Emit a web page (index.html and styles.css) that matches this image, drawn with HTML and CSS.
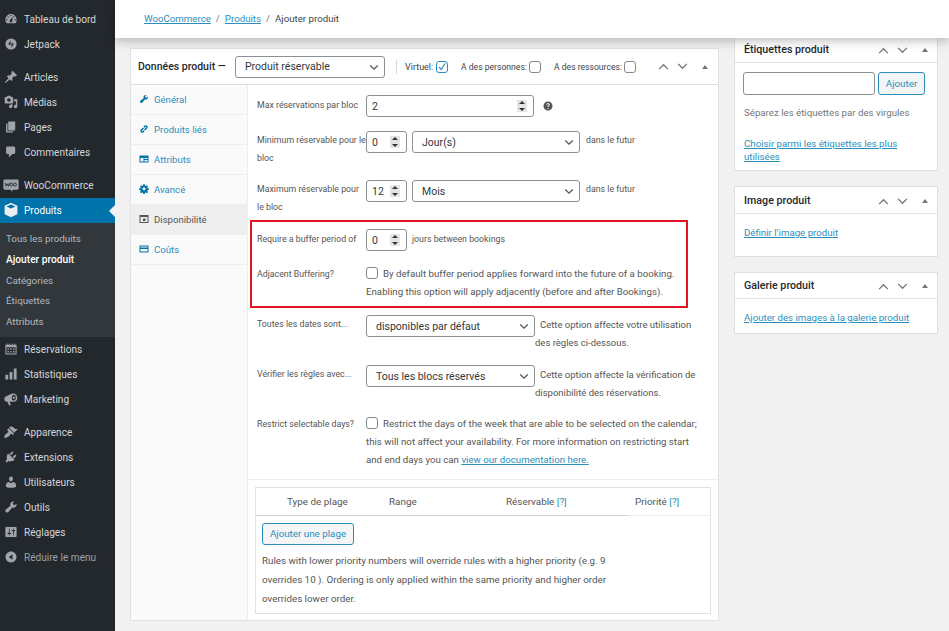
FILE: index.html
```html
<!DOCTYPE html>
<html lang="fr">
<head>
<meta charset="utf-8">
<title>Ajouter produit</title>
<link rel="stylesheet" href="styles.css">
</head>
<body>
<div class="page">
<aside class="sidebar">
  <nav class="menu">
    <a class="item"><svg class="ic" viewBox="0 0 20 20"><path fill-rule="evenodd" d="M3.76 16h12.48c1.1-1.37 1.76-3.11 1.76-5 0-4.42-3.58-8-8-8s-8 3.58-8 8c0 1.89.66 3.63 1.76 5zM10 4c.55 0 1 .45 1 1s-.45 1-1 1-1-.45-1-1 .45-1 1-1zM6 6c.55 0 1 .45 1 1s-.45 1-1 1-1-.45-1-1 .45-1 1-1zm8 0c.55 0 1 .45 1 1s-.45 1-1 1-1-.45-1-1 .45-1 1-1zm-5.37 5.55L12 7v6c0 1.1-.9 2-2 2s-2-.9-2-2c0-.57.24-1.08.63-1.45zM4 10c.55 0 1 .45 1 1s-.45 1-1 1-1-.45-1-1 .45-1 1-1zm12 0c.55 0 1 .45 1 1s-.45 1-1 1-1-.45-1-1 .45-1 1-1z"/></svg>Tableau de bord</a>
    <a class="item"><svg class="ic" viewBox="0 0 20 20"><path fill-rule="evenodd" d="M10 2a8 8 0 1 0 0 16 8 8 0 0 0 0-16zM9.400 4.500v7L6 10.300zM10.600 15.500v-7l3.400 1.200z"/></svg>Jetpack</a>
    <a class="item sep"><svg class="ic" viewBox="0 0 20 20"><path d="M10.44 3.02l1.82-1.82 6.36 6.35-1.83 1.82c-1.05-.68-2.48-.57-3.41.36l-.75.75c-.92.93-1.04 2.35-.35 3.41l-1.83 1.82-2.41-2.41-2.8 2.79c-.42.42-3.38 2.71-3.8 2.29s1.86-3.39 2.28-3.81l2.79-2.79L4.1 9.36l1.83-1.82c1.05.69 2.48.57 3.4-.36l.75-.75c.93-.92 1.05-2.35.36-3.41z"/></svg>Articles</a>
    <a class="item"><svg class="ic" viewBox="0 0 20 20"><path fill-rule="evenodd" d="M13 11V4c0-.55-.45-1-1-1h-1.67L9 1H5L3.67 3H2c-.55 0-1 .45-1 1v7c0 .55.45 1 1 1h10c.55 0 1-.45 1-1zM7 4.5c1.38 0 2.5 1.12 2.5 2.5S8.38 9.5 7 9.5 4.5 8.38 4.5 7 5.62 4.5 7 4.5zM14 6h5v10.5c0 1.38-1.12 2.5-2.5 2.5S14 17.88 14 16.5s1.12-2.5 2.5-2.5c.17 0 .34.02.5.05V9h-3V6zm-4 8.05V13h2v3.5c0 1.38-1.12 2.5-2.5 2.5S7 17.88 7 16.5 8.12 14 9.5 14c.17 0 .34.02.5.05z"/></svg>Médias</a>
    <a class="item"><svg class="ic" viewBox="0 0 20 20"><path d="M6 15V2h10v13H6zm-1 1h8v2H3V5h2v11z"/></svg>Pages</a>
    <a class="item"><svg class="ic" viewBox="0 0 20 20"><path d="M5 2h9c1.1 0 2 .9 2 2v7c0 1.1-.9 2-2 2h-2l-5 5v-5H5c-1.1 0-2-.9-2-2V4c0-1.1.9-2 2-2z"/></svg>Commentaires</a>
    <a class="item sep"><svg class="ic woo" viewBox="0 0 20 20"><path d="M2 3h16c.8 0 1.500.7 1.500 1.500v10c0 .8-.7 1.500-1.500 1.500h-5.500L11 18.500 10 16H2c-.8 0-1.500-.7-1.500-1.500v-10C.5 3.700 1.200 3 2 3z"/><path class="woo-mark" d="M3 7.500l1 4 1.500-3 1.500 3 1-4M10.500 7.500a1.700 2 0 1 0 .01 0zM15 7.500a1.700 2 0 1 0 .01 0z"/></svg>WooCommerce</a>
    <a class="item current"><svg class="ic" viewBox="0 0 20 20"><path fill-rule="evenodd" d="M10 1l8 3.800v10.400L10 19l-8-3.800V4.800zM10 3L4.500 5.600 10 8.200l5.500-2.600z"/></svg>Produits</a>
    <ul class="submenu">
      <li>Tous les produits</li>
      <li class="on">Ajouter produit</li>
      <li>Catégories</li>
      <li>Étiquettes</li>
      <li>Attributs</li>
    </ul>
    <a class="item"><svg class="ic" viewBox="0 0 20 20"><path fill-rule="evenodd" d="M2 4h2V2h1v2h2V2h1v2h4V2h1v2h2V2h1v2h2v14H2zM3.500 7.500v9h13v-9zM5 9h2v2H5zm4 0h2v2H9zm4 0h2v2h-2zm-8 4h2v2H5zm4 0h2v2H9zm4 0h2v2h-2z"/></svg>Réservations</a>
    <a class="item"><svg class="ic" viewBox="0 0 20 20"><path d="M2 11h4v7H2zM8 7h4v11H8zM14 2h4v16h-4z"/></svg>Statistiques</a>
    <a class="item"><svg class="ic" viewBox="0 0 20 20"><path fill-rule="evenodd" d="M13.500 2C16.500 2 19 5 19 8.500S16.500 14 14 14H8l2 5H7l-2-5H4c-2 0-3.500-1.500-3.500-4 0-2 1-3.500 3-4l7-3.500c.8-.3 1.600-.5 2.500-.5zm.5 2c-1.700 0-2.800 2-2.800 4.500s1.100 3.500 2.800 3.500 2.800-1.300 2.800-3.800S15.700 4 14 4zm0 2.500c.9 0 1.500.8 1.500 1.800S14.900 10 14 10s-1.500-.7-1.500-1.700.6-1.800 1.500-1.800z"/></svg>Marketing</a>
    <a class="item sep"><svg class="ic" viewBox="0 0 20 20"><path d="M14.480 11.060L7.410 3.990l1.500-1.500c.5-.56 2.300-.47 3.510.32 1.210.8 1.430 1.280 2.910 2.100 1.180.64 2.450 1.260 4.450.85zm-.71.71L6.700 4.700 4.930 6.470c-.39.39-.39 1.020 0 1.410l1.060 1.060c.39.39.39 1.030 0 1.420-.6.6-1.430 1.110-2.210 1.690-.35.26-.7.53-1.010.84C1.430 13.230.4 16.500.4 18.500c2 0 5.300-1.020 6.640-2.370.31-.31.58-.66.84-1.010.58-.78 1.090-1.610 1.690-2.210.39-.39 1.030-.39 1.420 0l1.060 1.060c.39.39 1.020.39 1.410 0z"/></svg>Apparence</a>
    <a class="item"><svg class="ic" viewBox="0 0 20 20"><path d="M13.110 4.360L9.870 7.600 8 5.730l3.240-3.240c.35-.34 1.050-.2 1.560.32.52.51.66 1.210.31 1.550zm-8 1.770l.91-1.120 9.010 9.010-1.190.84c-.71.71-2.630 1.160-3.820 1.160H6.140L4.900 17.260c-.59.59-1.540.59-2.120 0-.59-.58-.59-1.530 0-2.120l1.240-1.240v-3.880c0-1.130.4-3.190 1.090-3.890zm7.260 3.970l3.240-3.240c.34-.35 1.040-.21 1.550.31.52.51.66 1.210.32 1.550l-3.240 3.250z"/></svg>Extensions</a>
    <a class="item"><svg class="ic" viewBox="0 0 20 20"><path d="M10 9.250c-2.270 0-2.730-3.440-2.730-3.440C7 4.020 7.820 2 9.970 2c2.160 0 2.980 2.020 2.710 3.810 0 0-.41 3.440-2.680 3.440zm0 2.570L12.720 10c2.390 0 4.520 2.330 4.520 4.530v2.490s-3.650 1.130-7.240 1.130c-3.650 0-7.240-1.130-7.240-1.130v-2.490c0-2.250 1.940-4.480 4.470-4.480z"/></svg>Utilisateurs</a>
    <a class="item"><svg class="ic" viewBox="0 0 20 20"><path d="M16.680 9.770c-1.340 1.340-3.300 1.670-4.950.99l-5.410 6.520c-.99.99-2.590.99-3.580 0s-.99-2.590 0-3.570l6.520-5.420c-.68-1.650-.35-3.610.99-4.950 1.280-1.280 3.120-1.620 4.720-1.060l-2.890 2.890 2.820 2.820 2.860-2.870c.53 1.580.18 3.390-1.080 4.650z"/></svg>Outils</a>
    <a class="item"><svg class="ic" viewBox="0 0 20 20"><path fill-rule="evenodd" d="M18 16V4c0-.55-.45-1-1-1H3c-.55 0-1 .45-1 1v12c0 .55.45 1 1 1h14c.55 0 1-.45 1-1zM8 11h1c.55 0 1 .45 1 1s-.45 1-1 1H8v1.500c0 .28-.22.5-.5.5s-.5-.22-.5-.5V13H6c-.55 0-1-.45-1-1s.45-1 1-1h1V5.500c0-.28.22-.5.5-.5s.5.22.5.5V11zm5-2h-1c-.55 0-1-.45-1-1s.45-1 1-1h1V5.500c0-.28.22-.5.5-.5s.5.22.5.5V7h1c.55 0 1 .45 1 1s-.45 1-1 1h-1v5.500c0 .28-.22.5-.5.5s-.5-.22-.5-.5V9z"/></svg>Réglages</a>
    <a class="item collapse"><svg class="ic" viewBox="0 0 20 20"><path fill-rule="evenodd" d="M10 2.160c4.330 0 7.840 3.510 7.840 7.840s-3.510 7.840-7.840 7.840-7.840-3.510-7.840-7.840 3.510-7.840 7.840-7.840zM12 14V6l-5 4z"/></svg>Réduire le menu</a>
  </nav>
</aside>

<div class="wrap">
  <header class="topbar">
    <a class="link">WooCommerce</a><span class="slash">/</span><a class="link">Produits</a><span class="slash">/</span><span>Ajouter produit</span>
  </header>

  <div class="columns">
    <main class="panel">
      <div class="panel-head">
        <strong class="panel-title">Données produit —</strong>
        <div class="select type-select"><span>Produit réservable</span><svg class="chev" viewBox="0 0 12 8"><path d="M1.500 1.500 6 6l4.500-4.500"/></svg></div>
        <span class="vline"></span>
        <label class="opt virt">Virtuel:<span class="cb checked"><svg viewBox="0 0 12 12"><path d="M2.500 6.200 5 9l5-7.500"/></svg></span></label>
        <label class="opt pers">A des personnes:<span class="cb"></span></label>
        <label class="opt res">A des ressources:<span class="cb"></span></label>
        <div class="handles">
          <svg viewBox="0 0 12 8"><path d="M1 7l5-5 5 5"/></svg>
          <svg viewBox="0 0 12 8"><path d="M1 1l5 5 5-5"/></svg>
          <i class="tri"></i>
        </div>
      </div>
      <div class="panel-body">
        <ul class="tabs">
          <li><svg viewBox="0 0 20 20"><path d="M16.680 9.770c-1.340 1.340-3.300 1.670-4.950.99l-5.410 6.520c-.99.99-2.590.99-3.580 0s-.99-2.590 0-3.570l6.520-5.420c-.68-1.650-.35-3.610.99-4.950 1.280-1.280 3.120-1.620 4.720-1.060l-2.890 2.890 2.820 2.820 2.860-2.870c.53 1.580.18 3.390-1.080 4.650z"/></svg>Général</li>
          <li><svg viewBox="0 0 20 20"><path fill="none" d="M9 8l-4.500 4.500a2.300 2.300 0 0 0 3.200 3.200L10 13.400M11 12l4.500-4.500a2.300 2.300 0 0 0-3.200-3.200L10 6.600"/></svg>Produits liés</li>
          <li><svg viewBox="0 0 20 20"><path fill-rule="evenodd" d="M1 3h18v14H1zM3 8v7h6V8zm8 0v2h6V8zm0 4v3h6v-3z"/></svg>Attributs</li>
          <li><svg viewBox="0 0 20 20"><path fill-rule="evenodd" d="M8.500 1h3l.5 2.600 1.700.7 2.200-1.500 2.100 2.100-1.500 2.200.7 1.700 2.600.5v3l-2.600.5-.7 1.700 1.500 2.200-2.100 2.100-2.200-1.500-1.700.7-.5 2.600h-3l-.5-2.600-1.700-.7-2.200 1.500-2.100-2.100 1.500-2.200-.7-1.700-2.600-.5v-3l2.600-.5.7-1.700-1.500-2.200 2.100-2.100 2.200 1.500 1.700-.7zM10 7a3 3 0 1 0 0 6 3 3 0 0 0 0-6z" transform="translate(0 -.500)"/></svg>Avancé</li>
          <li class="active"><svg viewBox="0 0 20 20"><path fill-rule="evenodd" d="M1 2h18v16H1zM3 6v10h14V6zm5 3h5v5H8z"/></svg>Disponibilité</li>
          <li><svg viewBox="0 0 20 20"><path fill-rule="evenodd" d="M1 3h18v14H1zM3 5v2h14V5zm0 5v5h14v-5z"/></svg>Coûts</li>
        </ul>
        <div class="content">
          <div class="group">
            <div class="row r1">
              <div class="lbl">Max réservations par bloc</div>
              <div class="num wide"><span>2</span><i class="spin"></i></div>
              <svg class="help" viewBox="0 0 20 20"><path fill-rule="evenodd" d="M10 1a9 9 0 1 0 0 18 9 9 0 0 0 0-18zM9 14h2v2H9zM6.500 7.500C6.700 5.500 8.200 4.300 10.200 4.300c2 0 3.500 1.200 3.500 3 0 1.400-.8 2.100-1.700 2.800-.7.500-1 .9-1 1.900H9c0-1.600.5-2.300 1.500-3.100.7-.5 1.100-.9 1.100-1.500 0-.8-.6-1.300-1.500-1.300S8.700 6.600 8.600 7.500z"/></svg>
            </div>
            <div class="row two">
              <div class="lbl">Minimum réservable pour le<br>bloc</div>
              <div class="num small"><span>0</span><i class="spin"></i></div>
              <div class="select unit"><span>Jour(s)</span><svg class="chev" viewBox="0 0 12 8"><path d="M1.500 1.500 6 6l4.500-4.500"/></svg></div>
              <span class="after">dans le futur</span>
            </div>
            <div class="row two">
              <div class="lbl">Maximum réservable pour<br>le bloc</div>
              <div class="num small"><span>12</span><i class="spin"></i></div>
              <div class="select unit"><span>Mois</span><svg class="chev" viewBox="0 0 12 8"><path d="M1.500 1.500 6 6l4.500-4.500"/></svg></div>
              <span class="after">dans le futur</span>
            </div>
            <section class="hilite">
              <div class="row buf">
                <div class="lbl">Require a buffer period of</div>
                <div class="num small"><span>0</span><i class="spin"></i></div>
                <span class="after near">jours between bookings</span>
              </div>
              <div class="row adj">
                <div class="lbl">Adjacent Buffering?</div>
                <p class="desc"><span class="cb"></span>By default buffer period applies forward into the future of a booking.<br>Enabling this option will apply adjacently (before and after Bookings).</p>
              </div>
            </section>
            <div class="row sel6">
              <div class="lbl">Toutes les dates sont...</div>
              <div class="select mid"><span>disponibles par défaut</span><svg class="chev" viewBox="0 0 12 8"><path d="M1.500 1.500 6 6l4.500-4.500"/></svg></div>
              <p class="note">Cette option affecte votre utilisation<br><span class="out">des règles ci-dessous.</span></p>
            </div>
            <div class="row sel7">
              <div class="lbl">Vérifier les règles avec...</div>
              <div class="select mid"><span>Tous les blocs réservés</span><svg class="chev" viewBox="0 0 12 8"><path d="M1.500 1.500 6 6l4.500-4.500"/></svg></div>
              <p class="note">Cette option affecte la vérification de<br><span class="out">disponibilité des réservations.</span></p>
            </div>
            <div class="row adj">
              <div class="lbl">Restrict selectable days?</div>
              <p class="desc"><span class="cb"></span>Restrict the days of the week that are able to be selected on the calendar;<br>this will not affect your availability. For more information on restricting start<br>and end days you can <a class="link">view our documentation here.</a></p>
            </div>
          </div>
          <div class="ranges">
            <div class="ranges-head">
              <span>Type de plage</span>
              <span>Range</span>
              <span>Réservable <a class="q">[?]</a></span>
              <span>Priorité <a class="q">[?]</a></span>
            </div>
            <div class="ranges-body">
              <button class="btn add" type="button">Ajouter une plage</button>
              <p>Rules with lower priority numbers will override rules with a higher priority (e.g. 9<br>overrides 10 ). Ordering is only applied within the same priority and higher order<br>overrides lower order.</p>
            </div>
          </div>
        </div>
      </div>
    </main>

    <aside class="side">
      <section class="box tags">
        <h2 class="box-head">Étiquettes produit<span class="handles"><svg viewBox="0 0 12 8"><path d="M1 7l5-5 5 5"/></svg><svg viewBox="0 0 12 8"><path d="M1 1l5 5 5-5"/></svg><i class="tri"></i></span></h2>
        <div class="box-body">
          <div class="tag-form"><input class="tag-input" type="text" aria-label="Étiquette"><button class="btn" type="button">Ajouter</button></div>
          <p class="hint">Séparez les étiquettes par des virgules</p>
          <a class="link choose">Choisir parmi les étiquettes les plus utilisées</a>
        </div>
      </section>
      <section class="box img">
        <h2 class="box-head">Image produit<span class="handles"><svg viewBox="0 0 12 8"><path d="M1 7l5-5 5 5"/></svg><svg viewBox="0 0 12 8"><path d="M1 1l5 5 5-5"/></svg><i class="tri"></i></span></h2>
        <div class="box-body"><a class="link">Définir l’image produit</a></div>
      </section>
      <section class="box gal">
        <h2 class="box-head">Galerie produit<span class="handles"><svg viewBox="0 0 12 8"><path d="M1 7l5-5 5 5"/></svg><svg viewBox="0 0 12 8"><path d="M1 1l5 5 5-5"/></svg><i class="tri"></i></span></h2>
        <div class="box-body"><a class="link">Ajouter des images à la galerie produit</a></div>
      </section>
    </aside>
  </div>
</div>
</div>
</body>
</html>
```

FILE: styles.css
```css
* { box-sizing: border-box; }
html, body { margin: 0; padding: 0; height: 100%; overflow: hidden; }
body { font-family: Roboto, "Noto Sans", sans-serif; font-size: 10px; line-height: 18px; color: #555; background: #f1f1f1; }
p, h2, ul { margin: 0; padding: 0; list-style: none; }
a { cursor: pointer; }
.link { color: #2b8fbd; text-decoration: underline; }
.page { display: flex; height: 631px; overflow: hidden; }

/* sidebar */
.sidebar { flex: 0 0 115px; background: #23282d; color: #d3d6d8; padding-top: 7px; }
.item { display: flex; align-items: center; height: 25px; padding-left: 24px; position: relative; font-size: 10.100px; }
.item .ic { position: absolute; left: 4px; top: 5px; width: 14px; height: 14px; fill: #a0a5aa; }
.item.sep { margin-top: 8px; }
.item .woo { left: 3px; width: 16px; height: 16px; top: 4px; }
.woo-mark { fill: none; stroke: #23282d; stroke-width: 1.200; }
.item.current { background: #0073aa; color: #fff; }
.item.current .ic { fill: #e8eef2; left: 3px; top: 4px; width: 16px; height: 16px; }
.item.current::after { content: ""; position: absolute; right: 0; top: 7px; border: 6px solid transparent; border-right-color: #f1f1f1; border-left-width: 0; }
.item.collapse { color: #9da1a5; }
.submenu { background: #32373c; height: 114px; padding: 6px 0 0 6px; color: #b4b9be; font-size: 9.800px; }
.submenu li { height: 20.800px; line-height: 20.800px; }
.submenu .on { color: #fff; font-weight: 500; font-size: 10.200px; }

/* top */
.wrap { flex: 1; min-width: 0; display: flex; flex-direction: column; }
.topbar { position: relative; z-index: 2; height: 38px; background: #fff; box-shadow: 0 3px 10px rgba(0,0,0,.25); padding-left: 29px; display: flex; align-items: center; font-size: 9.700px; color: #3c434a; padding-bottom: 1px; }
.slash { margin: 0 5px; color: #777; }
.columns { display: flex; align-items: flex-start; padding: 10px 11px 0 15px; gap: 15px; }

/* main panel */
.panel { flex: 0 0 589px; width: 589px; min-width: 0; height: 573px; background: #fff; border: 1px solid #e0e2e4; display: flex; flex-direction: column; }
.panel-head { flex: 0 0 36px; display: flex; align-items: center; border-bottom: 1px solid #dcdfe2; padding-left: 7px; position: relative; white-space: nowrap; }
.panel-title { font-weight: 500; color: #23282d; font-size: 10.500px; width: 97px; flex: none; }
.select { display: flex; align-items: center; justify-content: space-between; height: 22px; border: 1px solid #8c8f94; border-radius: 3px; background: #fff; color: #32373c; padding: 1px 5px 0 9px; font-size: 10.500px; flex: none; }
.chev { width: 10px; height: 7px; fill: none; stroke: #50575e; stroke-width: 1.600; }
.type-select { width: 150px; }
.vline { width: 1px; height: 14px; background: #d8d8d8; margin: 0 8px 0 11px; }
.opt { display: flex; align-items: center; color: #3c434a; font-size: 8.600px; }
.opt .cb { margin-left: 2px; }
.opt.virt .cb { margin-left: 3px; }
.virt { width: 56px; font-size: 9px; }
.pers { width: 93px; }
.res { width: 84px; }
.cb { display: inline-block; width: 12px; height: 12px; border: 1px solid #7e8993; border-radius: 3px; background: #fff; flex: none; vertical-align: -2px; margin-right: 5px; }
.opt .cb { margin-right: 0; }
.cb.checked { border-color: #2b8fbd; }
.cb svg { display: block; width: 10px; height: 10px; fill: none; stroke: #2b8fbd; stroke-width: 1.500; }
.handles { display: flex; align-items: center; margin-left: auto; }
.handles svg { width: 11px; height: 7px; fill: none; stroke: #72777c; stroke-width: 1.500; margin-right: 8px; }
.handles .tri { width: 0; height: 0; border: 3px solid transparent; border-bottom: 4px solid #72777c; border-top: 0; margin-left: 6px; }
.panel-head .handles { margin-right: 10px; }

.panel-body { flex: 1; display: flex; min-height: 0; }
.tabs { flex: 0 0 117px; background: #fafafa; border-right: 1px solid #eee; }
.tabs li { height: 30px; border-bottom: 1px solid #eee; display: flex; align-items: center; padding: 1px 0 0 8px; color: #2b8fbd; font-size: 9.600px; }
.tabs svg { width: 10px; height: 10px; fill: #0073aa; margin: -2px 5px 0 0; flex: none; }
.tabs li:nth-child(2) svg path { stroke: #0073aa; stroke-width: 3; }
.tabs .active { background: #eee; color: #555; }
.tabs .active svg { fill: #555; }

.content { flex: 1; min-width: 0; }
.group { padding: 10px 0 10px 9px; border-bottom: 1px solid #eee; }
.row { display: flex; align-items: flex-start; white-space: nowrap; }
.lbl { flex: 0 0 109px; width: 109px; font-size: 8.800px; color: #555; line-height: 18px; }
.r1 { height: 22px; margin-bottom: 14px; }
.r1 .lbl { padding-top: 1px; }
.num { display: flex; align-items: center; justify-content: space-between; height: 22px; border: 1px solid #8c8f94; border-radius: 3px; background: #fff; padding: 1px 6px 0 5px; color: #32373c; font-size: 10.500px; flex: none; }
.wide { width: 168px; }
.small { width: 41px; }
.spin { display: block; width: 10px; height: 12px; background: #e4e4e4; position: relative; margin-top: -1px; }
.spin::before, .spin::after { content: ""; position: absolute; left: 2px; border: 3px solid transparent; }
.spin::before { top: 1px; border-bottom: 3px solid #333; border-top: 0; }
.spin::after { bottom: 1px; border-top: 3px solid #333; border-bottom: 0; }
.help { width: 10px; height: 10px; fill: #555; margin: 6px 0 0 9px; }
.two { height: 36px; margin-bottom: 13px; }
.unit { width: 168px; margin-left: 5px; }
.after { margin-left: 6px; font-size: 8.800px; color: #555; line-height: 18px; }
.near { margin-left: 5px; }
.hilite { border: 2px solid #e3161f; width: 438px; margin: -9px 0 7px -7px; padding: 7px 0 5px 5px; }
.buf { height: 22px; margin-bottom: 14px; }
.buf .lbl, .buf .after { padding-top: 1px; }
.desc { font-size: 9.700px; color: #555; line-height: 18px; }
.sel6, .sel7 { height: 36px; margin-bottom: 14px; }
.mid { width: 169px; }
.note { font-size: 9.500px; padding-left: 5px; line-height: 17.500px; margin-top: 1px; }
.note .out { margin-left: -5px; }
.ranges { margin: 7px 7px 0 7px; height: 127px; border: 1px solid #dfe1e3; }
.ranges-head { display: grid; grid-template-columns: 133px 117px 121px 1fr; height: 27px; align-items: center; font-size: 9.900px; color: #555; }
.ranges-head > span:first-child { padding-left: 31px; }
.ranges-head > span:last-child { padding-left: 8px; }
.ranges-body { border-top: 1px solid #eee; padding: 7px 6px 0; position: relative; }
.ranges-body::before { content: ""; position: absolute; left: 0; top: -1px; width: 372px; height: 1px; background: #cdd2d8; }
.ranges-body p { margin-top: 6px; line-height: 19px; font-size: 9.800px; white-space: nowrap; }
.q { color: #2b8fbd; }
.btn { height: 22px; border: 1px solid #2b8fbd; border-radius: 3px; background: #f3f5f6; color: #2b8fbd; font: inherit; font-size: 9.800px; padding: 0; display: block; white-space: nowrap; }
.add { width: 92px; }

/* side */
.side { flex: 0 0 204px; margin-top: -13px; }
.box { background: #fff; border: 1px solid #dcdfe2; margin-bottom: 15px; }
.box-head { display: flex; align-items: center; font-size: 10.700px; font-weight: 500; color: #23282d; border-bottom: 1px solid #e2e4e7; padding-left: 9px; }
.box-head .handles { margin-right: 9px; }
.box-body { padding: 0 9px; font-size: 9.700px; }
.tags { height: 136px; }
.tags .box-head { height: 27px; padding-top: 2px; }
.tags .box-body { padding-top: 9px; padding-left: 8px; }
.tag-form { display: flex; gap: 3px; }
.tag-input { width: 132px; height: 23px; border: 1px solid #8c8f94; border-radius: 3px; background: #fff; }
.tag-form .btn { width: 47px; height: 23px; }
.hint { margin: 9px 0 0 1px; color: #72777c; }
.choose { display: block; margin: 15px 0 0 1px; line-height: 13px; }
.img { height: 71px; }
.img .box-head { height: 27px; padding-top: 2px; }
.img .box-body { padding-top: 10px; }
.gal { height: 62px; }
.gal .box-head { height: 26px; padding-top: 1px; }
.gal .box-body { padding-top: 10px; }
```
